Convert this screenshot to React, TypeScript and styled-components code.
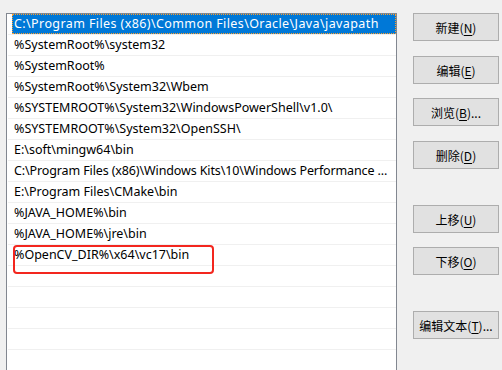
import React from 'react';
import styled, { createGlobalStyle } from 'styled-components';

const Global = createGlobalStyle`
  html, body { margin: 0; padding: 0; background: #f0f0f0; overflow: hidden; }
  body { font-family: "Noto Sans", "Noto Sans CJK SC", sans-serif; }
`;

const Page = styled.div`
  display: flex;
  align-items: flex-start;
  gap: 16px;
  padding: 13px 3px 0 6px;
  height: 370px;
  box-sizing: border-box;
  overflow: hidden;
`;

const List = styled.div`
  position: relative;
  flex-shrink: 0;
  width: 391px;
  height: 420px;
  box-sizing: border-box;
  border: 1px solid #828790;
  background: #ffffff;
  padding-left: 1px;
  padding-right: 0;
`;

const Row = styled.div`
  height: 20px;
  border-bottom: 1px solid #f0f0f0;
  display: flex;
`;

const Cell = styled.div<{ $selected?: boolean; $spacing?: number }>`
  flex: 1;
  margin-left: 4px;
  padding-left: 2px;
  height: 20px;
  box-sizing: border-box;
  line-height: 20px;
  font-size: 12.5px;
  letter-spacing: ${(p) => p.$spacing ?? 0}px;
  white-space: nowrap;
  overflow: hidden;
  color: ${(p) => (p.$selected ? '#ffffff' : '#000000')};
  background: ${(p) => (p.$selected ? '#0078d7' : 'transparent')};
  outline: ${(p) => (p.$selected ? '1px dotted #ff9f2a' : 'none')};
  outline-offset: -1px;
`;

const Highlight = styled.div`
  position: absolute;
  left: 6px;
  top: 231px;
  width: 201px;
  height: 29px;
  box-sizing: border-box;
  border: 2.5px solid #f3261e;
  border-radius: 4px;
  pointer-events: none;
`;

const Buttons = styled.div`
  display: flex;
  flex-direction: column;
  width: 86px;
  flex-shrink: 0;
`;

const Button = styled.button<{ $space: number }>`
  margin-top: ${(p) => p.$space}px;
  width: 86px;
  height: 28px;
  box-sizing: border-box;
  border: 1px solid #adadad;
  background: #e1e1e1;
  font-family: "Noto Sans CJK SC", "Noto Sans", sans-serif;
  font-size: 12px;
  color: #000;
  padding: 0;
  display: flex;
  align-items: center;
  justify-content: center;
  u { text-decoration: underline; text-underline-offset: 2px; }
`;

const paths: { text: string; spacing?: number }[] = [
  { text: 'C:\\Program Files (x86)\\Common Files\\Oracle\\Java\\javapath', spacing: 0.4 },
  { text: '%SystemRoot%\\system32' },
  { text: '%SystemRoot%' },
  { text: '%SystemRoot%\\System32\\Wbem' },
  { text: '%SYSTEMROOT%\\System32\\WindowsPowerShell\\v1.0\\' },
  { text: '%SYSTEMROOT%\\System32\\OpenSSH\\' },
  { text: 'E:\\soft\\mingw64\\bin' },
  { text: 'C:\\Program Files (x86)\\Windows Kits\\10\\Windows Performance ...', spacing: -0.12 },
  { text: 'E:\\Program Files\\CMake\\bin' },
  { text: '%JAVA_HOME%\\bin' },
  { text: '%JAVA_HOME%\\jre\\bin' },
  { text: '%OpenCV_DIR%\\x64\\vc17\\bin' },
  { text: '' },
  { text: '' },
  { text: '' },
  { text: '' },
  { text: '' },
  { text: '' },
  { text: '' },
];

const buttons: { label: string; key: string; tail: string; space: number }[] = [
  { label: '新建(', key: 'N', tail: ')', space: 0 },
  { label: '编辑(', key: 'E', tail: ')', space: 15 },
  { label: '浏览(', key: 'B', tail: ')...', space: 14 },
  { label: '删除(', key: 'D', tail: ')', space: 15 },
  { label: '上移(', key: 'U', tail: ')', space: 36 },
  { label: '下移(', key: 'O', tail: ')', space: 14 },
  { label: '编辑文本(', key: 'T', tail: ')...', space: 36 },
];

export default function App() {
  return (
    <>
      <Global />
      <Page>
        <List>
          {paths.map((p, i) => (
            <Row key={i}>
              <Cell $selected={i === 0} $spacing={p.spacing}>
                {p.text}
              </Cell>
            </Row>
          ))}
          <Highlight />
        </List>
        <Buttons>
          {buttons.map((b) => (
            <Button key={b.key} $space={b.space}>
              {b.label}
              <u>{b.key}</u>
              {b.tail}
            </Button>
          ))}
        </Buttons>
      </Page>
    </>
  );
}
